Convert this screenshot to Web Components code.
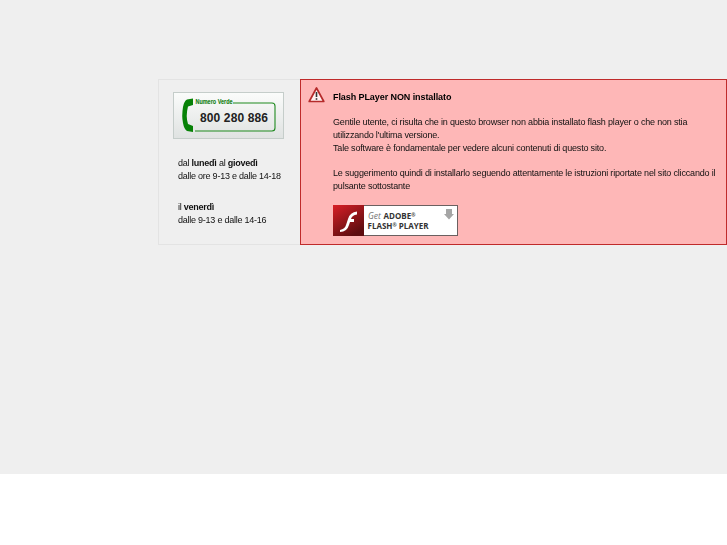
<!DOCTYPE html>
<html lang="it">
<head>
<meta charset="utf-8">
<title>Flash Player</title>
<style>
  html, body { margin: 0; background: #fff; }
  body { font-family: "Liberation Sans", Arial, sans-serif; font-size: 9px; letter-spacing: -0.21px; color: #111; }
</style>
</head>
<body>
<script>
class PageBand extends HTMLElement {
    connectedCallback() {
        this.attachShadow({ mode: "open" }).innerHTML = `
            <style>
                :host { display: block; height: 474px; background: #efefef; box-sizing: border-box; padding: 79px 0 0 158px; }
                .fila { display: flex; align-items: stretch; height: 166px; }
            </style>
            <div class="fila"><slot></slot></div>
        `;
    }
}

class GreenNumber extends HTMLElement {
    connectedCallback() {
        this.attachShadow({ mode: "open" }).innerHTML = `
            <style>
                :host { display: block; width: 111px; height: 47px; letter-spacing: 0; }
                svg { display: block; }
                text { font-family: "Liberation Sans", Arial, sans-serif; }
            </style>
            <svg width="111" height="47" viewBox="0 0 111 47">
                <defs>
                    <linearGradient id="fondo" x1="0" y1="0" x2="0" y2="1">
                        <stop offset="0" stop-color="#fbfcfb"/>
                        <stop offset="1" stop-color="#dfe2e1"/>
                    </linearGradient>
                </defs>
                <rect x=".5" y=".5" width="110" height="46" fill="url(#fondo)" stroke="#c5cdca"/>
                <path d="M60 11H99Q102 11 102 14V36Q102 39 99 39H22" fill="none" stroke="#1f8a1f" stroke-width="1.1"/>
                <path d="M20 6.500L14 7.500Q11 9 10 15Q8.500 24 10 31Q11 37 14 39L20 40V34L15 32Q12.500 24 15 14.500L20 13Z" fill="#078207"/>
                <text x="22.500" y="12" font-size="8" font-weight="700" fill="#138013" stroke="#138013" stroke-width=".15" textLength="37" lengthAdjust="spacingAndGlyphs">Numero Verde</text>
                <text x="27" y="30" font-size="12" font-weight="700" fill="#222" textLength="68" lengthAdjust="spacing">800 280 886</text>
            </svg>
        `;
    }
}

class ContactPanel extends HTMLElement {
    connectedCallback() {
        this.attachShadow({ mode: "open" }).innerHTML = `
            <style>
                :host { display: block; width: 142px; box-sizing: border-box; border: 1px solid #e3e3e3; border-right: 0; padding: 12px 0 0 14px; line-height: 13px; color: #111; letter-spacing: -0.24px; }
                .orari { margin: 18px 0 0 5px; will-change: opacity; }
            </style>
            <slot name="logo"></slot>
            <div class="orari"><slot></slot></div>
        `;
    }
}

class WarningIcon extends HTMLElement {
    connectedCallback() {
        this.attachShadow({ mode: "open" }).innerHTML = `
            <style>
                :host { display: block; width: 18px; height: 18px; }
                svg { display: block; }
            </style>
            <svg width="18" height="18" viewBox="0 0 18 18">
                <path d="M9.500 2L16.800 15.500H2.200Z" fill="#fff0f0" stroke="#b52a2a" stroke-width="1.700" stroke-linejoin="round"/>
                <path d="M9.500 6V11" stroke="#333" stroke-width="1.600"/>
                <path d="M9.500 12.200V13.800" stroke="#333" stroke-width="1.600"/>
            </svg>
        `;
    }
}

class FlashBadge extends HTMLElement {
    connectedCallback() {
        this.attachShadow({ mode: "open" }).innerHTML = `
            <style>
                :host { display: block; width: 125px; height: 31px; letter-spacing: 0; }
                svg { display: block; }
                text { font-family: "Open Sans", "Liberation Sans", sans-serif; fill: #333; }
            </style>
            <svg width="125" height="31" viewBox="0 0 125 31">
                <defs>
                    <linearGradient id="rojo" x1="0" y1="0" x2="0.6" y2="1">
                        <stop offset="0" stop-color="#d81f26"/>
                        <stop offset="1" stop-color="#5d0d10"/>
                    </linearGradient>
                </defs>
                <rect x=".5" y=".5" width="124" height="30" fill="#fff" stroke="#6b6060"/>
                <rect x="0" y="0" width="31" height="31" fill="url(#rojo)"/>
                <path d="M24 6.500Q17 7 15 14L13 20Q12 24 7 25V27Q14 27 16 20L17 17H21V14H18Q19 10 24 9.500Z" fill="#fff"/>
                <text x="35" y="14" font-size="8.500" font-style="italic" style="fill:#777">Get</text>
                <text x="50.500" y="14" font-size="8" font-weight="700">ADOBE<tspan font-size="5" dy="-2">&#174;</tspan></text>
                <text x="34.500" y="24" font-size="8" font-weight="700">FLASH<tspan font-size="5" dy="-2">&#174;</tspan><tspan dy="2"> PLAYER</tspan></text>
                <path d="M113 4H119V9H121L116 14.500L111 9H113Z" fill="#a5a5a5"/>
            </svg>
        `;
    }
}

class AlertPanel extends HTMLElement {
    connectedCallback() {
        this.attachShadow({ mode: "open" }).innerHTML = `
            <style>
                :host { display: flex; flex: 1; min-width: 0; box-sizing: border-box; background: #feb7b7; border: 1px solid #bf2b2b; padding: 6px 8px 0 6px; line-height: 12.75px; color: #111; letter-spacing: -0.18px; }
                .testo { margin-left: 8px; min-width: 0; }
                h2 { font-size: 9px; letter-spacing: -0.08px; margin: 5px 0 12px; line-height: 13px; color: #000; }
                .corpo { will-change: opacity; }
                .pulsante { margin-top: 12px; }
            </style>
            <warning-icon></warning-icon>
            <div class="testo">
                <h2 class="corpo"><slot name="titolo"></slot></h2>
                <div class="corpo"><slot></slot></div>
                <div class="pulsante"><flash-badge></flash-badge></div>
            </div>
        `;
    }
}

customElements.define("page-band", PageBand);
customElements.define("green-number", GreenNumber);
customElements.define("contact-panel", ContactPanel);
customElements.define("warning-icon", WarningIcon);
customElements.define("flash-badge", FlashBadge);
customElements.define("alert-panel", AlertPanel);
</script>

<page-band>
    <contact-panel>
        <green-number slot="logo"></green-number>
        <p style="margin:0 0 18px">dal <b>lunedì</b> al <b>giovedì</b><br>dalle ore 9-13 e dalle 14-18</p>
        <p style="margin:0">il <b>venerdì</b><br>dalle 9-13 e dalle 14-16</p>
    </contact-panel>
    <alert-panel>
        <span slot="titolo">Flash PLayer NON installato</span>
        <div>Gentile utente, ci risulta che in questo browser non abbia installato flash player o che non stia utilizzando l'ultima versione.<br>Tale software è fondamentale per vedere alcuni contenuti di questo sito.<br><br>Le suggerimento quindi di installarlo seguendo attentamente le istruzioni riportate nel sito cliccando il pulsante sottostante</div>
    </alert-panel>
</page-band>
</body>
</html>
